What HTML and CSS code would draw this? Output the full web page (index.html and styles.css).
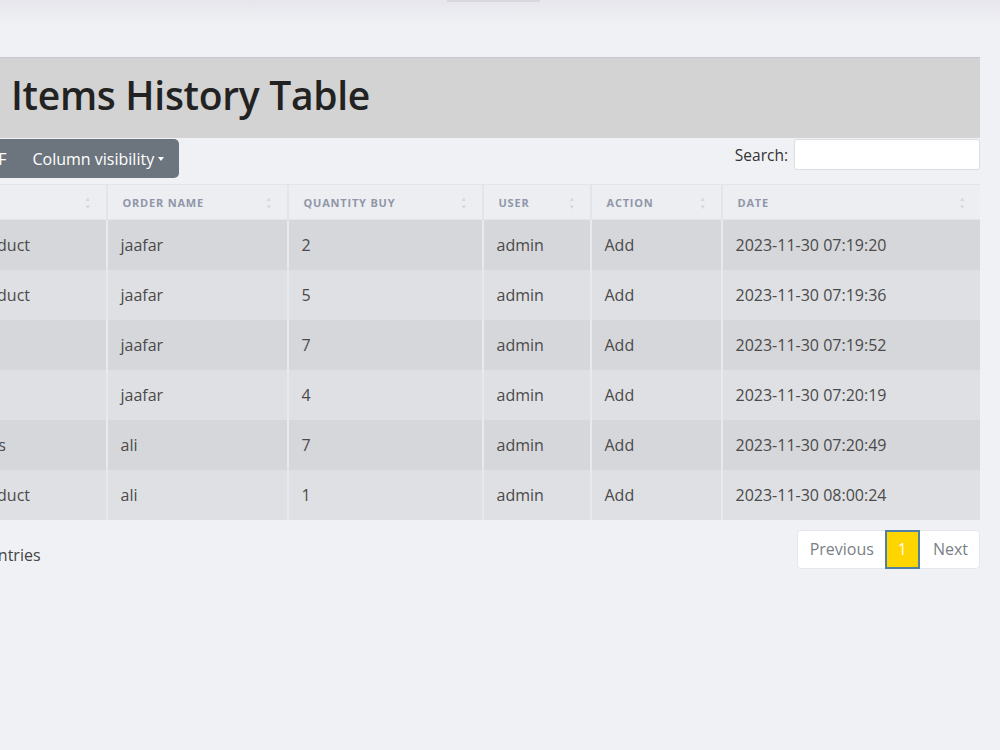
FILE: index.html
```html
<!DOCTYPE html>
<html lang="en">
<head>
  <meta charset="UTF-8">
  <title>Items History</title>
  <link rel="stylesheet" href="styles.css">
</head>
<body>
<div class="topbar"><span class="tab-line"></span></div>

<div class="card">
  <div class="card-title">
    <h1>Items History Table</h1>
  </div>

  <div class="toolbar">
    <div class="dt-buttons">
      <span class="btn">PDF</span>
      <span class="btn colvis">Column visibility <i class="caret"></i></span>
    </div>
    <label class="search">Search: <input type="text"></label>
  </div>

  <table class="dt">
    <colgroup>
      <col class="c1"><col class="c2"><col class="c3"><col class="c4"><col class="c5"><col>
    </colgroup>
    <thead>
      <tr>
        <th>Item</th>
        <th>Order Name</th>
        <th>Quantity Buy</th>
        <th>User</th>
        <th>Action</th>
        <th>Date</th>
      </tr>
    </thead>
    <tbody>
      <tr><td>New product</td><td>jaafar</td><td>2</td><td>admin</td><td>Add</td><td>2023-11-30 07:19:20</td></tr>
      <tr><td>New product</td><td>jaafar</td><td>5</td><td>admin</td><td>Add</td><td>2023-11-30 07:19:36</td></tr>
      <tr><td>Pen</td><td>jaafar</td><td>7</td><td>admin</td><td>Add</td><td>2023-11-30 07:19:52</td></tr>
      <tr><td>Book</td><td>jaafar</td><td>4</td><td>admin</td><td>Add</td><td>2023-11-30 07:20:19</td></tr>
      <tr><td>Notepads</td><td>ali</td><td>7</td><td>admin</td><td>Add</td><td>2023-11-30 07:20:49</td></tr>
      <tr><td>New product</td><td>ali</td><td>1</td><td>admin</td><td>Add</td><td>2023-11-30 08:00:24</td></tr>
    </tbody>
  </table>

  <div class="dt-footer">
    <div class="info">Showing 1 to 6 of 6 entries</div>
    <div class="paging">
      <span class="pg">Previous</span>
      <span class="pg active">1</span>
      <span class="pg next">Next</span>
    </div>
  </div>
</div>
</body>
</html>
```

FILE: styles.css
```css
* {
  margin: 0;
  padding: 0;
  box-sizing: border-box;
}
body {
  background: #f0f1f5;
  font-family: "Open Sans", "Noto Sans", sans-serif;
  color: #4a4a4a;
  font-size: 16px;
  overflow: hidden;
}
.topbar {
  height: 26px;
  background: linear-gradient(#e6e6ec, #f0f1f5);
}
.topbar .tab-line {
  display: block;
  width: 93px;
  height: 2px;
  margin-left: 447px;
  background: #d7d7dd;
}
.card {
  margin: 31px 20px 0 0;
}
.card-title {
  height: 81px;
  background: #d3d3d3;
  border-top: 1px solid #c8c8cc;
  padding: 0 0 7px 11px;
  display: flex;
  align-items: center;
}
.card-title h1 {
  font-size: 39px;
  font-weight: 600;
  color: #222;
  letter-spacing: -0.3px;
}

/* 按钮 + 搜索 */
.toolbar {
  display: flex;
  justify-content: space-between;
  align-items: flex-start;
  margin-top: 1px;
}
.dt-buttons {
  display: flex;
  margin-left: -36px;
  background: #6c757d;
  border-radius: 0 5px 5px 0;
}
.dt-buttons .btn {
  display: flex;
  align-items: center;
  height: 39px;
  padding: 0 13px;
  color: #fff;
  font-size: 16px;
}
.dt-buttons .colvis {
  padding-right: 15px;
}
.caret {
  display: inline-block;
  margin-left: 4px;
  border-top: 4px solid #fff;
  border-left: 3px solid transparent;
  border-right: 3px solid transparent;
}
.search {
  display: flex;
  align-items: center;
  gap: 6px;
  color: #333;
  font-size: 15.5px;
}
.search input {
  width: 186px;
  height: 31px;
  border: 1px solid #dcdde2;
  border-radius: 3px;
  background: #fff;
}

/* 表格 */
.dt {
  width: calc(100% + 80px);
  margin-left: -80px;
  margin-top: 6px;
  border-collapse: collapse;
  table-layout: fixed;
}
.dt col.c1 { width: 186px; }
.dt col.c2 { width: 181px; }
.dt col.c3 { width: 195px; }
.dt col.c4 { width: 108px; }
.dt col.c5 { width: 131px; }
.dt th {
  position: relative;
  height: 35px;
  padding: 0 15px;
  text-align: left;
  background: #eceef2;
  border: 1px solid #e2e4e9;
  border-right-width: 2px;
  color: #9096a8;
  font-size: 11px;
  font-weight: 700;
  letter-spacing: 0.8px;
  text-transform: uppercase;
}
.dt th::before,
.dt th::after {
  position: absolute;
  right: 14px;
  font-size: 6px;
  color: #d3d5dc;
}
.dt th::before {
  content: "\25B2";
  top: 10px;
}
.dt th::after {
  content: "\25BC";
  top: 18px;
}
.dt td {
  height: 50px;
  padding: 0 13px;
  border-right: 2px solid #e8e9ed;
  white-space: nowrap;
  overflow: hidden;
}
.dt td:last-child,
.dt th:last-child {
  border-right: 0;
}
.dt tbody tr:nth-child(odd) td {
  background: #d6d7db;
}
.dt tbody tr:nth-child(even) td {
  background: #dfe0e4;
}

/* 底部 */
.dt-footer {
  display: flex;
  justify-content: space-between;
  align-items: flex-start;
  margin-top: 10px;
}
.info {
  margin-left: -157px;
  padding-top: 14px;
  font-size: 16px;
  color: #444;
}
.paging {
  display: flex;
  height: 39px;
  background: #fff;
  border: 1px solid #e6e7eb;
  border-radius: 4px;
}
.pg {
  display: flex;
  align-items: center;
  padding: 0 11px 0 12px;
  color: #7a7f86;
  font-size: 16px;
}
.pg.next {
  padding: 0 11px 0 13px;
}
.pg.active {
  width: 35px;
  justify-content: center;
  padding: 0;
  background: #ffd500;
  color: #fff;
  border: 2px solid #4f7fa3;
  margin: -1px 0;
  height: 39px;
}
```
